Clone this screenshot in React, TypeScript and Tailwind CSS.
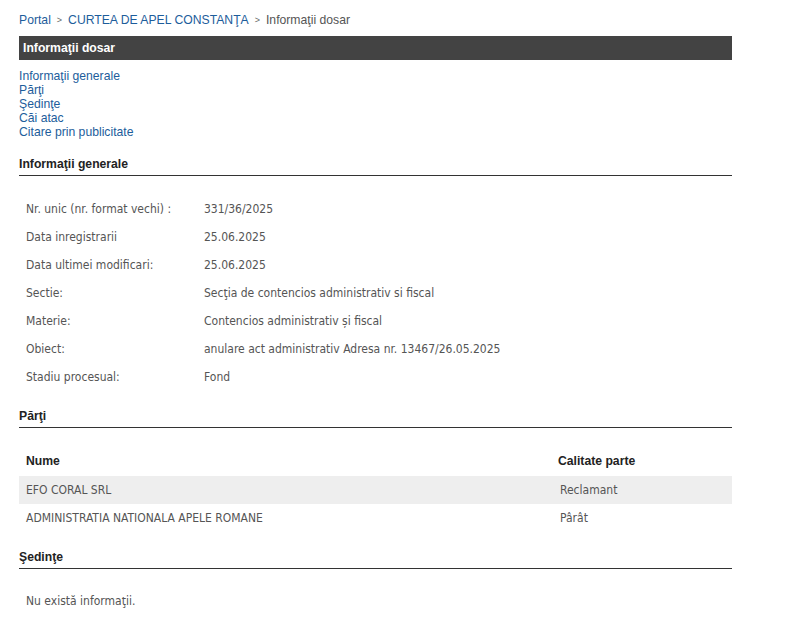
const info: [string, string][] = [
  ['Nr. unic (nr. format vechi) :', '331/36/2025'],
  ['Data inregistrarii', '25.06.2025'],
  ['Data ultimei modificari:', '25.06.2025'],
  ['Sectie:', 'Secţia de contencios administrativ si fiscal'],
  ['Materie:', 'Contencios administrativ și fiscal'],
  ['Obiect:', 'anulare act administrativ Adresa nr. 13467/26.05.2025'],
  ['Stadiu procesual:', 'Fond'],
];

const parti: [string, string][] = [
  ['EFO CORAL SRL', 'Reclamant'],
  ['ADMINISTRATIA NATIONALA APELE ROMANE', 'Pârât'],
];

const links = ['Informaţii generale', 'Părţi', 'Şedinţe', 'Căi atac', 'Citare prin publicitate'];

const data = "font-['DejaVu_Sans_Condensed','DejaVu_Sans',sans-serif] text-[12px] text-[#555]";

function SectionTitle({ children }: { children: React.ReactNode }) {
  return (
    <div className="border-b border-[#333] pb-[4px] text-[12.2px] font-bold leading-[14px] text-[#222]">
      {children}
    </div>
  );
}

export default function App() {
  return (
    <div className="min-h-screen bg-white font-['Liberation_Sans',Arial,sans-serif]">
      <div className="w-[713px] ml-[19px] pt-[13px]">
        <div className="flex items-center text-[12.2px] leading-[14px]">
          <a className="text-[#1d5d9b]">Portal</a>
          <span className="mx-[6px] text-[9px] text-[#666]">&gt;</span>
          <a className="text-[#1d5d9b]">CURTEA DE APEL CONSTANŢA</a>
          <span className="mx-[6px] text-[9px] text-[#666]">&gt;</span>
          <span className="text-[#555]">Informaţii dosar</span>
        </div>

        <div className="mt-[9px] flex h-[24px] items-center bg-[#434343] px-[4px] text-[12.2px] font-bold text-white">
          Informaţii dosar
        </div>

        <div className="mt-[9px] flex flex-col text-[12.2px] leading-[14px]">
          {links.map((l) => (
            <a key={l} className="text-[#1d5d9b]">
              {l}
            </a>
          ))}
        </div>

        <div className="mt-[18px]">
          <SectionTitle>Informaţii generale</SectionTitle>
        </div>
        <div className={`mt-[19px] px-[7px] ${data}`}>
          {info.map(([k, v]) => (
            <div key={k} className="flex h-[28px] items-center">
              <div className="w-[178px] shrink-0">{k}</div>
              <div>{v}</div>
            </div>
          ))}
        </div>

        <div className="mt-[18px]">
          <SectionTitle>Părţi</SectionTitle>
        </div>
        <div className="mt-[18px]">
          <div className="flex h-[30px] items-center px-[7px] text-[12.2px] font-bold text-[#222]">
            <div className="w-[532px] shrink-0">Nume</div>
            <div>Calitate parte</div>
          </div>
          {parti.map(([n, c], i) => (
            <div key={n} className={`flex h-[28px] items-center px-[7px] ${data} ${i === 0 ? 'bg-[#eee]' : ''}`}>
              <div className="w-[534px] shrink-0">{n}</div>
              <div>{c}</div>
            </div>
          ))}
        </div>

        <div className="mt-[18px]">
          <SectionTitle>Şedinţe</SectionTitle>
        </div>
        <div className={`mt-[23px] px-[7px] ${data}`}>Nu există informaţii.</div>
      </div>
    </div>
  );
}
